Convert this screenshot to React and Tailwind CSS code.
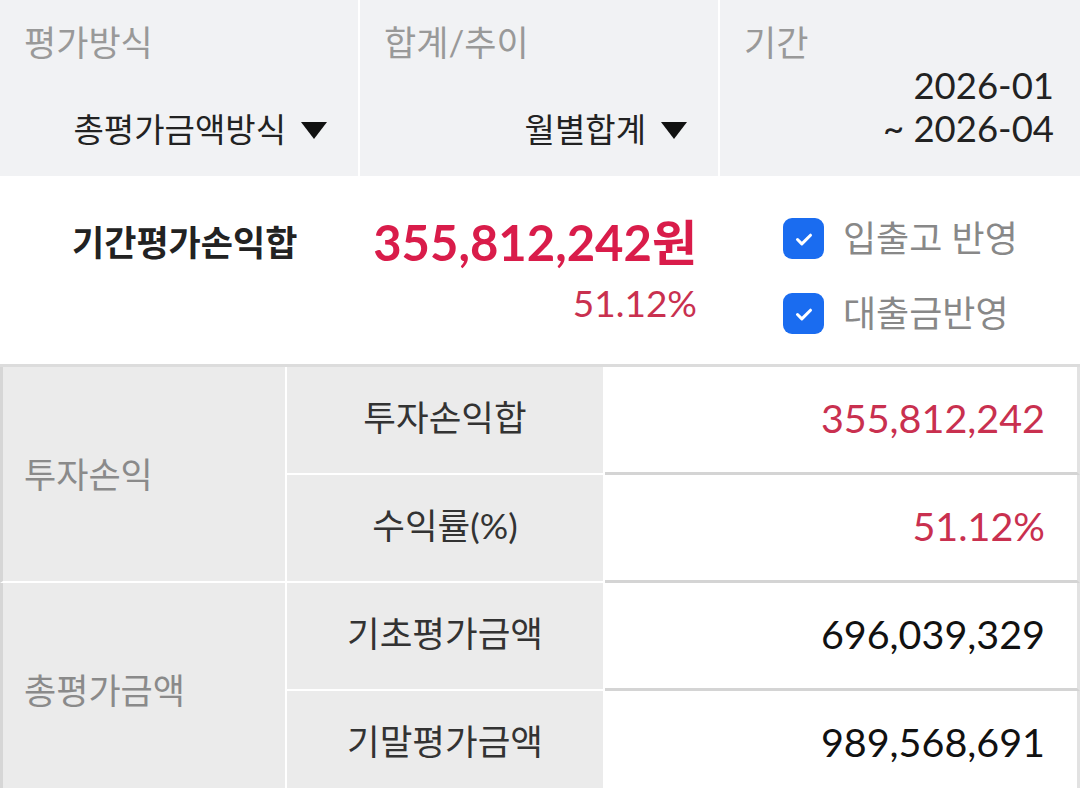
import { useState } from "react";

const FONT = { fontFamily: "Lato, 'Noto Sans CJK KR', 'Noto Sans', sans-serif" };

const Caret = () => (
  <svg width="28" height="20" viewBox="0 0 28 20" className="ml-[14px] shrink-0">
    <path d="M1 2h26L14 19z" fill="#111" />
  </svg>
);

function Check({ label, checked, onToggle }) {
  return (
    <button type="button" onClick={onToggle} className="flex h-[41px] items-center gap-[19px]">
      <span
        className={[
          "flex h-[41px] w-[41px] items-center justify-center rounded-[9px]",
          checked ? "bg-[#1a6cf0]" : "border-2 border-[#bbb] bg-white",
        ].join(" ")}
      >
        {checked && (
          <svg width="26" height="26" viewBox="0 0 24 24">
            <path d="M6 12.5l4 4L18 8.5" fill="none" stroke="#fff" strokeWidth="2.8" strokeLinecap="round" strokeLinejoin="round" />
          </svg>
        )}
      </span>
      <span className="text-[36px] leading-[41px] text-[#888]">{label}</span>
    </button>
  );
}

const rows = [
  { group: "투자손익", items: [
    { name: "투자손익합", value: "355,812,242", red: true },
    { name: "수익률(%)", value: "51.12%", red: true },
  ] },
  { group: "총평가금액", items: [
    { name: "기초평가금액", value: "696,039,329" },
    { name: "기말평가금액", value: "989,568,691" },
  ] },
];

export default function App() {
  const [inout, setInout] = useState(true);
  const [loan, setLoan] = useState(true);

  return (
    <div className="h-[788px] w-[1080px] overflow-hidden bg-white" style={FONT}>
      {/* filter header */}
      <div className="grid h-[176px] grid-cols-[358px_360px_1fr] bg-[#f1f2f4]">
        <div className="pr-[30px] pl-[24px] pt-[20px]">
          <div className="text-[35px] leading-[44px] text-[#999]">평가방식</div>
          <div className="mt-[44px] flex items-center justify-end text-[33px] leading-[43px] text-[#222]">
            총평가금액방식
            <Caret />
          </div>
        </div>
        <div className="border-l-2 border-white pr-[30px] pl-[24px] pt-[20px]">
          <div className="text-[35px] leading-[44px] text-[#999]">합계/추이</div>
          <div className="mt-[44px] flex items-center justify-end text-[33px] leading-[43px] text-[#222]">
            월별합계
            <Caret />
          </div>
        </div>
        <div className="border-l-2 border-white pr-[26px] pl-[24px] pt-[20px]">
          <div className="text-[35px] leading-[44px] text-[#999]">기간</div>
          <div className="text-right text-[36.5px] leading-[43px] text-[#222]">
            <div>2026-01</div>
            <div>~ 2026-04</div>
          </div>
        </div>
      </div>

      {/* summary */}
      <div className="flex h-[188px] items-start pt-[41px]">
        <div className="w-[358px] pl-[72px] text-[35px] font-bold leading-[50px] text-[#222]">기간평가손익합</div>
        <div className="w-[339px] text-right">
          <div className="text-[49px] font-bold leading-[50px] text-[#d91c4a]">355,812,242원</div>
          <div className="mt-[14px] text-[37px] leading-[44px] text-[#c9304f]">51.12%</div>
        </div>
        <div className="ml-[86px] flex flex-col gap-[34px] pt-[1px]">
          <Check label="입출고 반영" checked={inout} onToggle={() => setInout((v) => !v)} />
          <Check label="대출금반영" checked={loan} onToggle={() => setLoan((v) => !v)} />
        </div>
      </div>

      {/* result table */}
      <div className="border-t-[3px] border-[#dcdcdc]">
        {rows.map((row) => (
          <div key={row.group} className="grid grid-cols-[287px_318px_1fr]">
            <div className="flex items-center border-r-2 border-b-2 border-l-[3px] border-r-white border-b-white border-l-[#d6d6d6] bg-[#ebebeb] pl-[21px] text-[35px] text-[#8a8a8a]">
              {row.group}
            </div>
            <div className="flex flex-col">
              {row.items.map((it) => (
                <div key={it.name} className="flex h-[108px] items-center justify-center border-r-2 border-b-2 border-white bg-[#ebebeb] pb-[4px] text-[35.5px] text-[#333]">
                  {it.name}
                </div>
              ))}
            </div>
            <div className="flex flex-col">
              {row.items.map((it) => (
                <div
                  key={it.name}
                  className={[
                    "flex h-[108px] items-center justify-end border-r-[3px] border-b-[3px] border-r-[#e2e2e2] border-b-[#d4d4d4] pr-[32px] pb-[4px] text-[39.5px]",
                    it.red ? "text-[#c9304f]" : "text-[#111]",
                  ].join(" ")}
                >
                  {it.value}
                </div>
              ))}
            </div>
          </div>
        ))}
      </div>
    </div>
  );
}
